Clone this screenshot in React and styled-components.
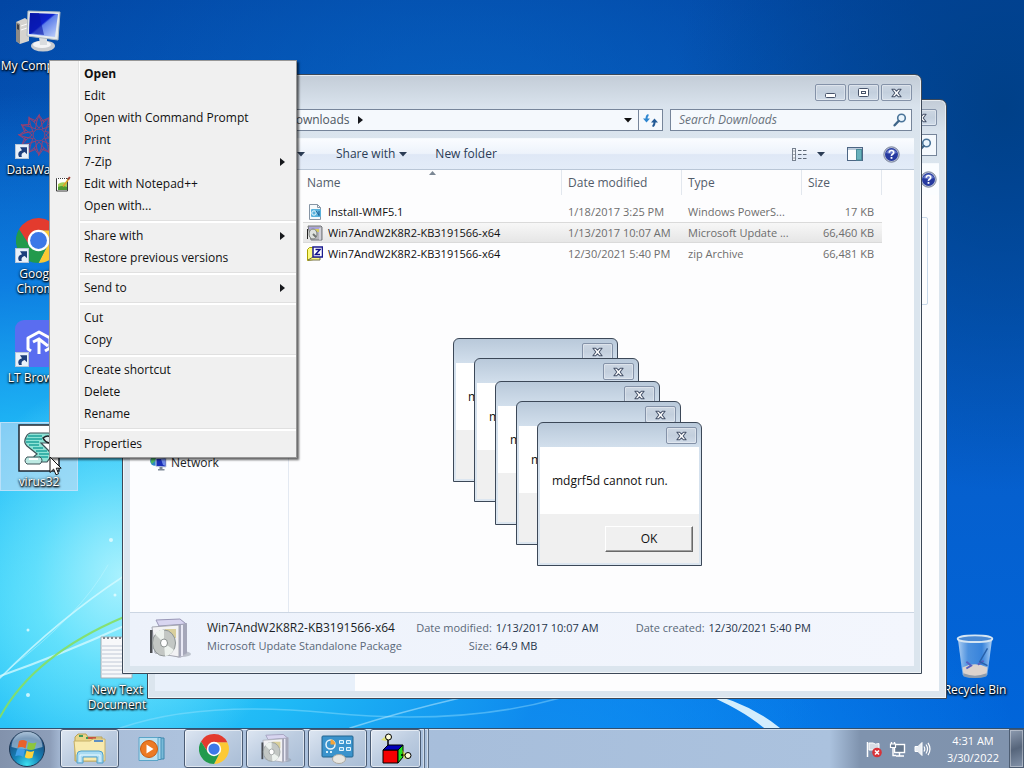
import React from "react";
import styled, { createGlobalStyle, css } from "styled-components";

const palette = {
  ink: "#1b1f26",
  frameLine: "#3c4858",
  frame: "#dbe5ee",
  label: "#5a6878",
  muted: "#6d6d6d",
  toolText: "#2b3c55",
};

const GlobalStyle = createGlobalStyle`
  *{
    box-sizing:border-box;
  }
  body{
    margin:0;
    font-family:"Open Sans","Noto Sans",sans-serif;
    font-size:12px;
    line-height:16px;
    color:${palette.ink};
  }
  button,input{
    font:inherit;
    color:inherit;
    margin:0;
    padding:0;
  }
`;

const Screen = styled.div`
  position: relative;
  display: flex;
  flex-direction: column;
  min-height: 100vh;
  overflow: hidden;
  background:
    radial-gradient(ellipse 17% 26% at 12% 75%, rgba(190, 248, 255, 0.85), rgba(130, 236, 254, 0.55) 50%, rgba(90, 220, 255, 0) 100%),
    radial-gradient(ellipse 75% 68% at 6% 80%, #3fd6fa 0%, #1fb9f6 34%, rgba(16, 138, 236, 0.75) 64%, rgba(8, 100, 210, 0) 100%),
    radial-gradient(ellipse 50% 35% at 50% 100%, #0d95fb, rgba(10, 120, 235, 0) 100%),
    radial-gradient(ellipse 32% 50% at 98% 14%, #004088, rgba(0, 66, 150, 0) 100%),
    radial-gradient(ellipse 50% 40% at 45% 18%, rgba(8, 104, 200, 0.7), rgba(8, 100, 200, 0) 100%),
    linear-gradient(180deg, #0246a4 0%, #0456bb 28%, #0560cf 65%, #0066dc 100%);
`;

const Wallpaper = styled.svg`
  position: absolute;
  inset: 0;
  width: 100%;
  height: 100%;
`;

const Desktop = styled.main`
  position: relative;
  flex: 1;
`;

/* desktop shortcuts */
const ShortcutColumn = styled.div`
  display: grid;
  grid-auto-rows: 104px;
  justify-items: start;
  align-items: start;
  width: 78px;
  padding-top: 6px;
`;

const ShortcutButton = styled.button`
  display: flex;
  flex-direction: column;
  align-items: center;
  gap: 2px;
  width: 78px;
  padding: 1px 0;
  border: 1px solid transparent;
  background: none;
  color: #fff;
  line-height: 15px;
  text-shadow: 0 1px 2px #000, 1px 1px 2px #000, 0 0 3px rgba(0, 0, 0, 0.6);
  white-space: pre;
  ${(props) =>
    props.$selected &&
    css`
      border-color: rgba(190, 225, 250, 0.9);
      background: rgba(190, 220, 245, 0.65);
    `}
`;

const FreeShortcut = styled.div`
  position: absolute;
  bottom: ${(props) => props.$bottom};
  left: ${(props) => props.$left || "auto"};
  right: ${(props) => props.$right || "auto"};
`;

/* windows */
const WindowFrame = styled.section`
  position: absolute;
  display: flex;
  flex-direction: column;
  padding: 0 7px 7px;
  border: 1px solid ${palette.frameLine};
  border-radius: 7px 7px 0 0;
  background: linear-gradient(180deg, #c3ccd7 0, #d9e3ed 32px, ${palette.frame} 70px);
  box-shadow: inset 0 0 0 1px rgba(255, 255, 255, 0.6);
`;

const BackWindow = styled(WindowFrame)`
  inset: 99px 77px 29px 147px;
`;

const FrontWindow = styled(WindowFrame)`
  inset: 74px 102px 54px 122px;
`;

const TitleBar = styled.header`
  display: flex;
  justify-content: flex-end;
  gap: 2px;
  height: 34px;
  padding: 9px 2px 0;
`;

const CaptionButton = styled.button`
  display: flex;
  align-items: center;
  justify-content: center;
  width: 31px;
  height: 17px;
  border: 1px solid #8492a8;
  border-radius: 2px;
  background: linear-gradient(180deg, #ccd6e2, #c3cfdd 50%, #d0dbe8);
  box-shadow: inset 0 0 0 1px rgba(255, 255, 255, 0.35);
`;

const AddressRow = styled.div`
  display: flex;
  gap: 7px;
  height: 22px;
  margin: 0 2px 7px;
`;

const AddressBar = styled.nav`
  flex: 1;
  display: flex;
  align-items: stretch;
  margin-left: 60px;
  border: 1px solid #76859a;
  background: #f5f9fd;
`;

const Crumb = styled.button`
  display: flex;
  align-items: center;
  gap: 8px;
  margin-left: 94px;
  margin-right: auto;
  border: 0;
  background: none;
  color: #4d5661;
`;

const AddressButton = styled.button`
  display: flex;
  align-items: center;
  justify-content: center;
  width: ${(props) => (props.$divided ? "24px" : "20px")};
  border: 0;
  border-left: ${(props) => (props.$divided ? "1px solid #76859a" : "0")};
  background: none;
`;

const SearchBox = styled.label`
  display: flex;
  align-items: center;
  width: 242px;
  padding: 0 4px 0 8px;
  border: 1px solid #76859a;
  background: #f5f9fd;
  input {
    flex: 1;
    min-width: 0;
    border: 0;
    outline: 0;
    background: none;
    font-style: italic;
  }
  input::placeholder {
    color: #68717c;
    opacity: 1;
  }
`;

const Toolbar = styled.div`
  display: flex;
  align-items: center;
  height: 32px;
  padding: 0 14px 0 167px;
  border-top: 1px solid #f5f9fd;
  border-bottom: 1px solid #b9c6d6;
  background: linear-gradient(180deg, #fafcff 0%, #edf3fb 48%, #dfe8f6 52%, #e3ecf8 100%);
`;

const ToolButton = styled.button`
  display: flex;
  align-items: center;
  gap: 4px;
  margin-right: ${(props) => props.$gap || "0"};
  border: 0;
  background: none;
  color: ${palette.toolText};
`;

const ToolSpacer = styled.div`
  flex: 1;
`;

const WindowBody = styled.div`
  flex: 1;
  display: flex;
  min-height: 0;
  background: #fdfdfe;
`;

const NavPane = styled.nav`
  width: 159px;
  padding: 284px 0 0 20px;
  border-right: 1px solid #e3e9f2;
  background: #fcfdff;
`;

const NavItem = styled.a`
  display: flex;
  align-items: center;
  gap: 4px;
  height: 18px;
  color: ${palette.ink};
  text-decoration: none;
`;

const FileArea = styled.div`
  flex: 1;
  padding-left: 14px;
`;

const FileTable = styled.table`
  width: 579px;
  table-layout: fixed;
  border-spacing: 0;
  th,
  td {
    padding: 0 6px;
    white-space: nowrap;
    overflow: hidden;
    text-align: left;
    font-weight: 400;
  }
  th {
    height: 25px;
    border-right: 1px solid #e2e7ee;
    color: #525c6a;
  }
  th:first-child,
  td:first-child {
    padding-left: 4px;
  }
  td {
    height: 21px;
    border-top: 1px solid transparent;
    border-bottom: 1px solid transparent;
    color: ${palette.muted};
    font-size: 11px;
  }
  td:last-child {
    padding-right: 8px;
    text-align: right;
  }
  tbody::before {
    content: "";
    display: block;
    height: 6px;
  }
`;

const FileRow = styled.tr`
  ${(props) =>
    props.$selected &&
    css`
      td {
        border-color: #dadada;
        background: linear-gradient(180deg, #f7f7f7, #e6e6e6);
      }
    `}
`;

const FileName = styled.span`
  display: flex;
  align-items: center;
  gap: 5px;
  color: #101010;
`;

const SortHeader = styled.th`
  position: relative;
`;

const SortMark = styled.span`
  position: absolute;
  top: 1px;
  left: 0;
  right: 0;
  line-height: 0;
  text-align: center;
`;

const DetailsPane = styled.footer`
  display: flex;
  align-items: flex-start;
  height: 54px;
  padding: 4px 16px 0 18px;
  border-top: 1px solid #ccd6e3;
  background: linear-gradient(90deg, #edf2fb, #f3f6fd);
  line-height: 18px;
`;

const DetailsColumn = styled.div`
  margin: 2px 12px 0 15px;
  color: ${palette.label};
  font-size: 11px;
  white-space: nowrap;
  strong {
    font-size: 12px;
    font-weight: 400;
    color: ${palette.ink};
  }
`;

const DetailsList = styled.dl`
  display: grid;
  grid-template-columns: 78px auto;
  column-gap: 4px;
  margin: 2px 28px 0 0;
  font-size: 11px;
  white-space: nowrap;
  dt {
    color: ${palette.label};
    text-align: right;
  }
  dd {
    margin: 0;
    color: #26344a;
  }
`;

const BackSide = styled.div`
  width: 200px;
  background: #e8f0fa;
`;

const BackPanel = styled.div`
  flex: 1;
  height: 88px;
  margin: 22px 11px 0 0;
  border: 1px solid #c9d9ea;
  border-radius: 2px;
`;

const BackToolbar = styled(Toolbar)`
  justify-content: flex-end;
  padding-right: 2px;
  border-bottom-color: #fbfdff;
  background: #fbfdff;
`;

/* message boxes */
const DialogFrame = styled.section`
  position: absolute;
  top: ${(props) => props.$top}px;
  left: ${(props) => props.$left}px;
  display: flex;
  flex-direction: column;
  width: 165px;
  padding: 0 2px 2px;
  border: 1px solid ${palette.frameLine};
  border-radius: 6px 6px 0 0;
  background: linear-gradient(180deg, #b9c9da 0, #d3e0ed 25px, #dce6f0 100%);
`;

const DialogTitle = styled.header`
  display: flex;
  justify-content: flex-end;
  height: 24px;
  padding: 4px 2px 0;
`;

const DialogText = styled.p`
  height: 67px;
  margin: 0;
  padding: 26px 12px 0;
  background: #fff;
  color: #111;
`;

const DialogFooter = styled.footer`
  display: flex;
  justify-content: flex-end;
  height: 49px;
  padding: 12px 6px 0;
  background: #f0f0f0;
`;

const DialogButton = styled.button`
  width: 88px;
  height: 26px;
  border: 1px solid;
  border-color: #fff #696969 #696969 #fff;
  box-shadow: inset -1px -1px 0 #a0a0a0;
  background: #f0f0f0;
  color: #111;
`;

/* context menu */
const Menu = styled.ul`
  position: absolute;
  top: 60px;
  left: 49px;
  width: 248px;
  margin: 0;
  padding: 2px 0;
  list-style: none;
  border: 1px solid #979797;
  background: linear-gradient(90deg, #f1f1f1 28px, #e2e3e3 28px, #e2e3e3 29px, #fff 29px, #fff 30px, #f0f0f0 30px);
  box-shadow: 2px 2px 2px rgba(0, 0, 0, 0.6);
`;

const MenuButton = styled.button`
  display: grid;
  grid-template-columns: 26px 1fr 8px;
  column-gap: 3px;
  align-items: center;
  width: 100%;
  height: 22px;
  padding: 0 8px 0 5px;
  border: 0;
  background: none;
  color: #111;
  text-align: left;
  font-weight: ${(props) => (props.$primary ? 700 : 400)};
`;

const MenuLine = styled.li`
  height: 8px;
  padding: 3px 0 0 30px;
  &::before {
    content: "";
    display: block;
    height: 2px;
    border-top: 1px solid #e0e0e0;
    background: #fff;
  }
`;

const MenuIcon = styled.span`
  height: 16px;
  line-height: 0;
`;

const Pointer = styled.svg`
  position: absolute;
  top: 456px;
  left: 49px;
`;

/* taskbar */
const Taskbar = styled.footer`
  position: relative;
  display: flex;
  align-items: stretch;
  height: 40px;
  border-top: 1px solid #31506f;
  box-shadow: inset 0 1px 0 rgba(255, 255, 255, 0.55);
  background: linear-gradient(90deg, #8292ac 0, #8d9eb9 50px, #a7bbd6 62px, #adc2dd 180px, #a7bedb 440px, #abc2de 81%, #7f93ae 84%, #8093ad 100%);
`;

const StartButton = styled.button`
  width: 54px;
  margin-right: 6px;
  border: 0;
  background: none;
  line-height: 0;
`;

const TaskButton = styled.button`
  display: flex;
  align-items: center;
  justify-content: center;
  width: ${(props) => (props.$stacked ? "51px" : "59px")};
  margin-right: ${(props) => (props.$stacked ? "0" : "3px")};
  border: 1px solid ${(props) => (props.$open ? "#4b5c74" : "transparent")};
  border-radius: 3px;
  background: ${(props) => (props.$open ? "linear-gradient(145deg, #dde6f2 0%, #bccce0 50%, #a9bdd6 100%)" : "none")};
  box-shadow: ${(props) => (props.$open ? "inset 0 0 0 1px rgba(255,255,255,.55)" : "none")};
`;

const StackEdge = styled.span`
  width: 4px;
  border-right: 1px solid #5c6e86;
  box-shadow: inset -1px 0 0 #cfdbe9;
`;

const Tray = styled.div`
  display: flex;
  align-items: center;
  gap: 6px;
  margin-left: auto;
`;

const TrayButton = styled.button`
  width: 18px;
  height: 18px;
  border: 0;
  background: none;
  line-height: 0;
`;

const Clock = styled.time`
  width: 72px;
  color: #fff;
  font-size: 11px;
  line-height: 17px;
  text-align: center;
`;

const ShowDesktop = styled.button`
  width: 15px;
  border: 1px solid #4d5d72;
  background: linear-gradient(160deg, #8d9bb0, #56657b 50%, #8393aa);
  box-shadow: inset 0 0 0 1px rgba(255, 255, 255, 0.35);
`;

/* small glyphs */
const CloseGlyph = () => (
  <svg width="13" height="10" viewBox="0 0 14 12">
    <path d="M1.5 1.5h3.3L7 3.8l2.2-2.3h3.3L9 6l3.5 4.5H9.2L7 8.2l-2.2 2.3H1.5L5 6z" fill="#fff" stroke="#47536a" strokeWidth="1.3" strokeLinejoin="round" />
  </svg>
);

const MinGlyph = () => (
  <svg width="12" height="10" viewBox="0 0 12 10">
    <rect x="0.5" y="5.5" width="10" height="4" rx="1" fill="#fff" stroke="#47536a" />
  </svg>
);

const MaxGlyph = () => (
  <svg width="11" height="9" viewBox="0 0 11 9">
    <rect x="0.5" y="0.5" width="10" height="8" rx="1" fill="#fff" stroke="#47536a" />
    <rect x="3.5" y="3.5" width="4" height="2" fill="#fff" stroke="#47536a" />
  </svg>
);

const DownGlyph = ({ fill = "#2b3c55" }) => (
  <svg width="8" height="5" viewBox="0 0 8 5">
    <path d="M0 0h8L4 4.5z" fill={fill} />
  </svg>
);

const RightGlyph = () => (
  <svg width="5" height="8" viewBox="0 0 5 8">
    <path d="M0 0v8l5-4z" fill="#16181c" />
  </svg>
);

const RefreshIcon = () => (
  <svg width="15" height="13" viewBox="0 0 15 13">
    <path d="M5.5 1Q3.5 1.3 3.5 5" fill="none" stroke="#2d86d0" strokeWidth="2" />
    <path d="M0 4.5h7L3.5 8.5z" fill="#2d86d0" />
    <path d="M9.5 12.2Q11.5 11.8 11.5 8" fill="none" stroke="#235a96" strokeWidth="2" />
    <path d="M8 8.5h7L11.5 4.5z" fill="#235a96" />
  </svg>
);

const SearchIcon = () => (
  <svg width="14" height="14" viewBox="0 0 14 14">
    <circle cx="8.5" cy="5" r="3.8" fill="#eaf5fd" stroke="#4a7499" strokeWidth="1.6" />
    <path d="M5.6 8L1.6 12.3" stroke="#3e6589" strokeWidth="2.4" strokeLinecap="round" />
  </svg>
);

const HelpIcon = () => (
  <svg width="17" height="17" viewBox="0 0 17 17">
    <circle cx="8.5" cy="8.5" r="7.7" fill="#c3cadb" stroke="#77819a" />
    <circle cx="8.5" cy="8.5" r="6.5" fill="#26399f" />
    <path d="M3 7a5.7 5.2 0 0 1 11 0Q8 9 3 7z" fill="#7f92dc" opacity=".65" />
    <path d="M6.3 6.8Q6.3 4.5 8.5 4.5T10.7 6.4Q10.7 7.5 9.5 8.2T8.5 10" fill="none" stroke="#fff" strokeWidth="1.7" />
    <rect x="7.6" y="11" width="1.8" height="1.8" fill="#fff" />
  </svg>
);

const ViewIcon = () => (
  <svg width="15" height="13" viewBox="0 0 15 13">
    <rect x="0.5" y="0.5" width="3" height="12" fill="#f2f5f9" stroke="#77818f" />
    <path d="M1.5 3h1M1.5 6.5h1M1.5 10h1" stroke="#505a6a" />
    <path d="M6 2.5h3.5M11 2.5h3.5M6 6.5h3.5M11 6.5h3.5M6 10.5h3.5M11 10.5h3.5" stroke="#5d6877" />
  </svg>
);

const PreviewIcon = () => (
  <svg width="16" height="14" viewBox="0 0 16 14">
    <rect x="0.5" y="0.5" width="15" height="13" fill="#fbfdff" stroke="#4d6684" />
    <path d="M1 2h14" stroke="#7d98b8" />
    <rect x="9.5" y="2.5" width="5" height="10.5" fill="#68b2bd" stroke="#4a8c99" />
  </svg>
);

const ShortcutArrow = () => (
  <g>
    <rect x="0.5" y="32.5" width="13" height="14" fill="#e9f1fa" stroke="#b7c6d8" />
    <path d="M4 45Q1.5 40 7 38.2L5 35.3h7v7l-2.3-2.3Q5.5 41 6.8 45z" fill="#1d3f7c" />
  </g>
);

/* pictures */
const ComputerIcon = () => (
  <svg width="48" height="48" viewBox="0 0 48 48">
    <defs>
      <linearGradient id="pcScreen" x1="0" y1="0" x2="1" y2="1">
        <stop offset="0" stopColor="#0a16a8" />
        <stop offset=".45" stopColor="#0d22cf" />
        <stop offset=".5" stopColor="#5f80ea" />
        <stop offset="1" stopColor="#c5d6fb" />
      </linearGradient>
    </defs>
    <path d="M1 14l9-4 4 3v20l-9 3-4-3z" fill="#d5d3cf" />
    <path d="M1 14l4 2v20l-4-3z" fill="#8d8a86" />
    <path d="M2 16l2 1v5l-2-1z" fill="#3f3f44" />
    <path d="M6 18l6-2M6 22l6-2" stroke="#fafafa" />
    <ellipse cx="28" cy="38" rx="12" ry="5.5" fill="#c9ccd0" />
    <ellipse cx="27" cy="36.5" rx="9" ry="3.6" fill="#f3f4f6" />
    <path d="M24 29h8v8h-7z" fill="#d9dcdf" />
    <path d="M13 3l32 1-2 28-31-4z" fill="#e6ebee" stroke="#aeb9c1" />
    <path d="M15 5l28 1-3 23-26-3z" fill="url(#pcScreen)" />
    <path d="M15 5h9l5 22-15-2z" fill="#0615a6" opacity=".6" />
  </svg>
);

const WagonIcon = () => (
  <svg width="48" height="48" viewBox="0 0 48 48">
    <g fill="none" stroke="#b93c60" strokeWidth="1" opacity=".8">
      <circle cx="24" cy="23" r="6" />
      {[0, 30, 60, 90, 120, 150, 180, 210, 240, 270, 300, 330].map((a) => (
        <path key={a} transform={`rotate(${a} 24 23)`} d="M24 16l5-6-5-7-5 7zM29 10l6-5M19 10l-5-4" />
      ))}
    </g>
    <ShortcutArrow />
  </svg>
);

const ChromeMark = ({ x = 0, y = 0, size = 48 }) => (
  <svg x={x} y={y} width={size} height={size} viewBox="0 0 48 48">
    <path d="M33.5 29.5L24 48A24 24 0 0 0 45.3 13H24z" fill="#fcc934" />
    <path d="M24 13H45.3A24 24 0 0 0 3.2 12L14.5 29.5z" fill="#e33b2e" />
    <path d="M14.5 29.5L3.2 12A24 24 0 0 0 24 48L33.5 29.5z" fill="#229a4c" />
    <circle cx="24" cy="24" r="11.5" fill="#fff" />
    <circle cx="24" cy="24" r="9" fill="#3c78e8" />
  </svg>
);

const ChromeShortcutIcon = () => (
  <svg width="48" height="48" viewBox="0 0 48 48">
    <ChromeMark x={1} y={2} size={45} />
    <ShortcutArrow />
  </svg>
);

const LtIcon = () => (
  <svg width="48" height="48" viewBox="0 0 48 48">
    <rect x="0" y="0" width="46" height="47" rx="9" fill="#5a6df0" />
    <path d="M16 31l-3-2V18l11-6 11 6v10l-5 3" fill="none" stroke="#fff" strokeWidth="3" strokeLinejoin="round" />
    <path d="M18 22l6-3 9 7M24 19v15" fill="none" stroke="#fff" strokeWidth="3" />
    <ShortcutArrow />
  </svg>
);

const ScriptIcon = () => (
  <svg width="48" height="48" viewBox="0 0 48 48">
    <rect x="4" y="1" width="40" height="46" fill="#fff" stroke="#1d2630" strokeWidth="1.5" />
    <path d="M15 9h18q4 0 5 5 0 4-5 5h-7l7 7q4 4 2 8l-3 4H20q-4-4 2-8l-10-8q-4-4-1-9 1-3 4-4z" fill="#8fe3d6" stroke="#3d5257" strokeWidth="1.2" />
    <path d="M13 12h14M11 15h16M11 18h13M14 21h10M18 24h10M21 27h11M24 30h10M24 33h9" stroke="#1fa39b" strokeWidth="1.3" />
    <path d="M12 33h13q4 3 0 7H12q-4-3 0-7z" fill="#bdeae3" stroke="#3d5257" />
    <path d="M28 14q5-4 9 0 2 4-3 5-4-1-6-5z" fill="#dfeeee" stroke="#1c2226" strokeWidth="1.5" />
    <path d="M14 35h9" stroke="#fff" strokeWidth="2" />
  </svg>
);

const NoteIcon = () => (
  <svg width="48" height="48" viewBox="0 0 48 48">
    <path d="M8 5h31v41H8z" fill="#f7f8fa" stroke="#a5adb5" />
    <path d="M9 14h29M9 18h29M9 22h29M9 26h29M9 30h29M9 34h29M9 38h29M9 42h29" stroke="#c0c8d6" />
    <path d="M10 6h28" stroke="#80868d" strokeWidth="2" strokeDasharray="2 2" />
  </svg>
);

const BinIcon = () => (
  <svg width="48" height="48" viewBox="-1 -2 50 50">
    <defs>
      <linearGradient id="binGlass" x1="0" x2="1">
        <stop offset="0" stopColor="#cfe3f8" stopOpacity=".85" />
        <stop offset=".3" stopColor="#6da5e2" stopOpacity=".7" />
        <stop offset=".7" stopColor="#4f91dd" stopOpacity=".7" />
        <stop offset="1" stopColor="#d2e7fa" stopOpacity=".85" />
      </linearGradient>
    </defs>
    <path d="M6 4h36l-5 38q-1 4-13 4t-13-4z" fill="url(#binGlass)" />
    <path d="M11 35q13-7 26 0l-1 7q-12 5-24 0z" fill="#dcd3cd" />
    <path d="M12 41q12 5 24 0v3q-12 4-24 0z" fill="#8e9bab" />
    <path d="M15 29l5 4-5 3M27 32l6-4" fill="none" stroke="#5760c0" strokeWidth="2" />
    <path d="M37 15l-8 14 8 4" fill="none" stroke="#2860a9" strokeWidth="1.5" />
    <ellipse cx="24" cy="5" rx="18" ry="3.5" fill="#4b8ad4" stroke="#d5e5f3" strokeWidth="2" />
  </svg>
);

const PackageIcon = ({ size = 44 }) => (
  <svg width={size} height={size} viewBox="0 0 44 44">
    <ellipse cx="34" cy="37" rx="9" ry="3" fill="#8d93a0" opacity=".5" />
    <path d="M8 3l24-1 7 5v30l-7 4-7-2V9z" fill="#b9bac8" />
    <path d="M8 3l24-1 6 5-27 2z" fill="#d8d5f0" stroke="#9a98b8" />
    <path d="M4 10l27-2v32L7 36z" fill="#f2f2f4" stroke="#a6a8b2" />
    <path d="M31 8l8-2v30l-8 4z" fill="#a5a7b9" />
    <path d="M34 8v31" stroke="#e9e9f5" strokeWidth="2" />
    <path d="M17 12h11v9H17z" fill="#d9cf9c" />
    <rect x="2" y="13" width="2.5" height="23" fill="#4a4d52" />
    <ellipse cx="16" cy="26" rx="11.5" ry="13" fill="#c3c7c4" stroke="#8f9695" />
    <path d="M16 26L7 17q4-5 9-4zM16 26l10 7q-4 6-9 6z" fill="#edf2ee" />
    <ellipse cx="16" cy="26" rx="3.5" ry="4" fill="#fff" stroke="#8a908f" />
  </svg>
);

const SmallPackageIcon = () => (
  <svg width="16" height="16" viewBox="0 0 16 16">
    <path d="M1 1h13l1 1v13H4z" fill="#b6b7bb" stroke="#75777d" />
    <path d="M2 2h11v2H2z" fill="#a9a3d8" />
    <path d="M7 4h5v3H7z" fill="#d8cb5f" />
    <rect x="0" y="4" width="1" height="10" fill="#222" />
    <ellipse cx="6" cy="9" rx="4" ry="5" fill="#dfe3df" stroke="#7c817e" />
    <path d="M6 9l3 3" stroke="#6f7471" strokeWidth="2" />
    <path d="M13 3v12" stroke="#ecebf6" />
  </svg>
);

const PowerShellIcon = () => (
  <svg width="16" height="16" viewBox="0 0 16 16">
    <path d="M2.5.5h8l3 3v12h-11z" fill="#f7fafc" stroke="#8695a5" />
    <path d="M10.500.5v3h3" fill="none" stroke="#8695a5" />
    <rect x="4" y="5" width="10" height="8" rx="1" fill="#58b2dd" />
    <circle cx="7" cy="9" r="2.2" fill="none" stroke="#eefaff" />
    <path d="M9 7l3 4M12 7v5" fill="none" stroke="#1d5f94" />
  </svg>
);

const ZipIcon = () => (
  <svg width="16" height="16" viewBox="0 0 16 16">
    <path d="M.5 3.500l2-2h4v12l-6 1z" fill="#fdfb7e" stroke="#a9a100" />
    <path d="M1 14h12v-3H6z" fill="#fdfb7e" stroke="#77724a" />
    <rect x="6" y="1" width="9.5" height="10" fill="#fff" stroke="#1b1b8f" strokeWidth="1.5" />
    <path d="M8.500 3.500h4.500l-4.500 5h4.500" fill="none" stroke="#11118a" strokeWidth="1.500" />
  </svg>
);

const NetworkIcon = () => (
  <svg width="17" height="16" viewBox="0 0 17 16">
    <circle cx="5" cy="6" r="4.800" fill="#2a86c8" />
    <path d="M1 4q2-3 5-2l-1 4-3 3q-2-2-1-5z" fill="#4bb865" />
    <path d="M6 3.500l10-.500v9l-10-.500z" fill="#1a2fb8" stroke="#c5d1df" />
    <path d="M11 4l4-.200v7L13 10z" fill="#6f8bea" />
    <path d="M9.500 12h3v2h2v1.500H8V14h1.500z" fill="#7d8896" />
  </svg>
);

const NotepadPlusIcon = () => (
  <svg width="16" height="16" viewBox="0 0 16 16">
    <path d="M1.500 2.500h11v12.500h-11z" fill="#fff" stroke="#3b3b3b" />
    <path d="M2 2.500h10" stroke="#fff" strokeDasharray="1 1" />
    <path d="M3 8q4-3 9-1v7H3z" fill="#a4d155" />
    <path d="M3 11q4-2 9 0v3H3z" fill="#4e9a35" />
    <path d="M8 10.500L14 2.500" stroke="#e0a12c" strokeWidth="1.600" />
    <path d="M13.200 3.500l1.600-2.500" stroke="#9c3a30" strokeWidth="1.800" />
  </svg>
);

const StartOrb = () => (
  <svg width="38" height="38" viewBox="0 0 38 38">
    <defs>
      <radialGradient id="orbBase" cx=".5" cy=".95" r=".95">
        <stop offset="0" stopColor="#3ce0f0" />
        <stop offset=".4" stopColor="#1583b8" />
        <stop offset=".8" stopColor="#1c4f82" />
        <stop offset="1" stopColor="#7fa3c4" />
      </radialGradient>
    </defs>
    <circle cx="19" cy="19" r="17.5" fill="url(#orbBase)" stroke="#1c3653" />
    <path d="M3.5 17a15.5 15.5 0 0 1 31 0q-15 5-31 0z" fill="#dbe8f4" opacity=".5" />
    <path d="M11 11q4-2 8 .5l-1.500 7q-4-2.500-8-.5z" fill="#e8622a" />
    <path d="M20.500 12q4 2.300 8 .3l-2 7q-4 1.700-7.500-.5z" fill="#8cc63e" />
    <path d="M9 19.500q4-2 8 .5l-1.800 7q-4-2.500-8-.7z" fill="#3f9fe8" />
    <path d="M18.600 20.500q4 2.300 7.600.3l-1.800 7q-4 1.700-7.600-.5z" fill="#fdd23c" />
  </svg>
);

const FolderIcon = () => (
  <svg width="36" height="32" viewBox="0 0 36 32">
    <path d="M3 4l3-3h8l2 3h14v24H3z" fill="#e9d589" stroke="#b9a258" />
    <path d="M7 3h4M14 5h9" stroke="#3f9b5c" strokeWidth="2" />
    <path d="M16 5h8" stroke="#c9553f" strokeWidth="2" />
    <path d="M2 8h16l3-2h12v22H4z" fill="#f8eaae" stroke="#c6b068" />
    <path d="M22 8h9" stroke="#5e8fc2" strokeWidth="2" />
    <path d="M5 30v-8q0-4 4-4h18q4 0 4 4v8h-6v-6H11v6z" fill="#a9dbf2" stroke="#4f9fca" />
    <path d="M8 29v-7h20v7" fill="none" stroke="#e9f8ff" />
  </svg>
);

const MediaIcon = () => (
  <svg width="28" height="26" viewBox="0 0 28 26">
    <path d="M20 2h6v21h-6z" fill="#78bad8" stroke="#3e86ac" />
    <path d="M17 1.500h6v22h-6z" fill="#a6d6eb" stroke="#4791b8" />
    <path d="M1 1.500h19v23H1z" fill="#bce1f1" stroke="#5aa5c8" />
    <circle cx="11" cy="13" r="8.500" fill="#ec7a24" stroke="#c95c12" />
    <path d="M8.500 8.500v9l7-4.500z" fill="#fff" />
  </svg>
);

const ControlIcon = () => (
  <svg width="34" height="30" viewBox="0 0 34 30">
    <rect x="1" y="2" width="31" height="21" rx="1" fill="#3b93cc" stroke="#23658f" />
    <circle cx="9.500" cy="10.500" r="4.500" fill="#3b93cc" stroke="#e9f5fb" strokeWidth="1.500" />
    <path d="M9.500 10.500V5.500a5 5 0 0 1 5 5z" fill="#f4a53b" />
    <path d="M5 18h2M9 18h2" stroke="#d8eef8" strokeWidth="2" />
    <path d="M18.500 6.500h4v3h-4zM25.500 6.500h4v3h-4zM18.500 13.500h4v3h-4zM25.500 13.500h4v3h-4z" fill="#5eaede" stroke="#e4f4fc" />
    <ellipse cx="18" cy="25" rx="6.500" ry="4.500" fill="#e8e6e0" stroke="#aaa79f" />
  </svg>
);

const CubeIcon = () => (
  <svg width="32" height="32" viewBox="0 0 32 32">
    <path d="M3 17h15v13H3z" fill="#f40000" stroke="#000" />
    <path d="M3 17l5-5h15l-5 5z" fill="#0000b8" stroke="#000" />
    <path d="M18 17l5-5v12l-5 6z" fill="#22e022" stroke="#000" />
    <path d="M8 12V5M21 22h5" stroke="#000" strokeWidth="1.500" />
    <path d="M1 7l7-6 3 3-5 4zM22 17l8 8-6 1z" fill="#f4f000" opacity=".5" />
    <circle cx="8.500" cy="4" r="3" fill="#fffdd8" stroke="#000" />
    <circle cx="28" cy="22.500" r="3" fill="#fffdd8" stroke="#000" />
  </svg>
);

const FlagIcon = () => (
  <svg width="18" height="18" viewBox="0 0 18 18">
    <path d="M2.500 2v15" stroke="#fff" strokeWidth="1.500" />
    <path d="M4 3h4q2 2 6 .5v7q-4 1.500-6-.5H4z" fill="#d6dce5" stroke="#fff" />
    <circle cx="12" cy="12.500" r="4.800" fill="#d83238" />
    <path d="M10 10.500l4 4M14 10.500l-4 4" stroke="#fff" strokeWidth="1.600" />
  </svg>
);

const WiredIcon = () => (
  <svg width="18" height="18" viewBox="0 0 18 18">
    <rect x="5.500" y="4.500" width="10" height="8" fill="#66788e" stroke="#fff" strokeWidth="1.400" />
    <path d="M10.500 13v2.500M7 16h8M2.500 2v2M5.500 2v2M4 8v7.500h3" stroke="#fff" strokeWidth="1.400" fill="none" />
    <path d="M1.500 4h5v3.500h-5z" fill="#66788e" stroke="#fff" strokeWidth="1.200" />
  </svg>
);

const SpeakerIcon = () => (
  <svg width="18" height="18" viewBox="0 0 18 18">
    <path d="M2 6.500h3l4-4v13l-4-4H2z" fill="#e8edf3" stroke="#fff" />
    <path d="M11 6.500q1.600 2.500 0 5M13 4.500q3 4.500 0 9M15 2.800q4 6.200 0 12.400" fill="none" stroke="#fff" strokeWidth="1.200" />
  </svg>
);

const shortcuts = [
  { label: "My Computer", Icon: ComputerIcon },
  { label: "DataWagon", Icon: WagonIcon },
  { label: "Google\nChrome", Icon: ChromeShortcutIcon },
  { label: "LT Browser", Icon: LtIcon },
  { label: "virus32", Icon: ScriptIcon, selected: true },
];

const files = [
  { name: "Install-WMF5.1", date: "1/18/2017 3:25 PM", type: "Windows PowerS...", size: "17 KB", icon: <PowerShellIcon /> },
  { name: "Win7AndW2K8R2-KB3191566-x64", date: "1/13/2017 10:07 AM", type: "Microsoft Update ...", size: "66,460 KB", icon: <SmallPackageIcon />, selected: true },
  { name: "Win7AndW2K8R2-KB3191566-x64", date: "12/30/2021 5:40 PM", type: "zip Archive", size: "66,481 KB", icon: <ZipIcon /> },
];

const menuItems = [
  { label: "Open", primary: true },
  { label: "Edit" },
  { label: "Open with Command Prompt" },
  { label: "Print" },
  { label: "7-Zip", sub: true },
  { label: "Edit with Notepad++", icon: <NotepadPlusIcon /> },
  { label: "Open with..." },
  null,
  { label: "Share with", sub: true },
  { label: "Restore previous versions" },
  null,
  { label: "Send to", sub: true },
  null,
  { label: "Cut" },
  { label: "Copy" },
  null,
  { label: "Create shortcut" },
  { label: "Delete" },
  { label: "Rename" },
  null,
  { label: "Properties" },
];

const dialogs = [
  { left: 453, top: 338 },
  { left: 474, top: 358 },
  { left: 495, top: 381 },
  { left: 516, top: 401 },
  { left: 537, top: 422 },
];

const Shortcut = ({ label, Icon, selected }) => (
  <ShortcutButton $selected={selected}>
    <Icon />
    <span>{label}</span>
  </ShortcutButton>
);

const Caption = ({ closeOnly }) => (
  <>
    {!closeOnly && (
      <>
        <CaptionButton aria-label="Minimize"><MinGlyph /></CaptionButton>
        <CaptionButton aria-label="Maximize"><MaxGlyph /></CaptionButton>
      </>
    )}
    <CaptionButton aria-label="Close"><CloseGlyph /></CaptionButton>
  </>
);

const Dialog = ({ left, top }) => (
  <DialogFrame $left={left} $top={top} role="dialog">
    <DialogTitle><Caption closeOnly /></DialogTitle>
    <DialogText>mdgrf5d cannot run.</DialogText>
    <DialogFooter><DialogButton>OK</DialogButton></DialogFooter>
  </DialogFrame>
);

const ControlPanelWindow = () => (
  <BackWindow>
    <TitleBar><Caption closeOnly /></TitleBar>
    <AddressRow>
      <AddressBar aria-label="Address" />
      <SearchBox>
        <input type="search" aria-label="Search" />
        <SearchIcon />
      </SearchBox>
    </AddressRow>
    <BackToolbar>
      <ToolButton aria-label="Help"><HelpIcon /></ToolButton>
    </BackToolbar>
    <WindowBody>
      <BackSide />
      <BackPanel />
    </WindowBody>
  </BackWindow>
);

const ExplorerWindow = () => (
  <FrontWindow>
    <TitleBar><Caption /></TitleBar>
    <AddressRow>
      <AddressBar aria-label="Address">
        <Crumb>Downloads <RightGlyph /></Crumb>
        <AddressButton aria-label="Previous locations"><DownGlyph fill="#111" /></AddressButton>
        <AddressButton aria-label="Refresh" $divided><RefreshIcon /></AddressButton>
      </AddressBar>
      <SearchBox>
        <input type="search" placeholder="Search Downloads" aria-label="Search Downloads" />
        <SearchIcon />
      </SearchBox>
    </AddressRow>
    <Toolbar>
      <ToolButton aria-label="Include in library" $gap="31px"><DownGlyph /></ToolButton>
      <ToolButton $gap="28px">Share with <DownGlyph /></ToolButton>
      <ToolButton>New folder</ToolButton>
      <ToolSpacer />
      <ToolButton aria-label="Change your view" $gap="10px"><ViewIcon /></ToolButton>
      <ToolButton aria-label="More options" $gap="22px"><DownGlyph /></ToolButton>
      <ToolButton aria-label="Preview pane" $gap="20px"><PreviewIcon /></ToolButton>
      <ToolButton aria-label="Help"><HelpIcon /></ToolButton>
    </Toolbar>
    <WindowBody>
      <NavPane>
        <NavItem href="#network"><NetworkIcon />Network</NavItem>
      </NavPane>
      <FileArea>
        <FileTable>
          <colgroup>
            <col />
            <col width="120" />
            <col width="120" />
            <col width="80" />
          </colgroup>
          <thead>
            <tr>
              <SortHeader>
                Name
                <SortMark>
                  <svg width="7" height="4" viewBox="0 0 7 4"><path d="M0 4l3.5-4L7 4z" fill="#7b8794" /></svg>
                </SortMark>
              </SortHeader>
              <th>Date modified</th>
              <th>Type</th>
              <th>Size</th>
            </tr>
          </thead>
          <tbody>
            {files.map((file) => (
              <FileRow key={file.type} $selected={file.selected}>
                <td><FileName>{file.icon}{file.name}</FileName></td>
                <td>{file.date}</td>
                <td>{file.type}</td>
                <td>{file.size}</td>
              </FileRow>
            ))}
          </tbody>
        </FileTable>
      </FileArea>
    </WindowBody>
    <DetailsPane>
      <PackageIcon />
      <DetailsColumn>
        <strong>Win7AndW2K8R2-KB3191566-x64</strong>
        <div>Microsoft Update Standalone Package</div>
      </DetailsColumn>
      <DetailsList>
        <dt>Date modified:</dt>
        <dd>1/13/2017 10:07 AM</dd>
        <dt>Size:</dt>
        <dd>64.9 MB</dd>
      </DetailsList>
      <DetailsList>
        <dt>Date created:</dt>
        <dd>12/30/2021 5:40 PM</dd>
      </DetailsList>
    </DetailsPane>
  </FrontWindow>
);

const ContextMenu = () => (
  <Menu>
    {menuItems.map((item, i) =>
      item ? (
        <li key={i}>
          <MenuButton $primary={item.primary}>
            <MenuIcon>{item.icon}</MenuIcon>
            <span>{item.label}</span>
            {item.sub && <RightGlyph />}
          </MenuButton>
        </li>
      ) : (
        <MenuLine key={i} />
      )
    )}
  </Menu>
);

const App = () => {
  return (
    <>
      <GlobalStyle />
      <Screen>
        <Wallpaper viewBox="0 0 1024 768" preserveAspectRatio="none" aria-hidden="true">
          <g fill="none" strokeLinecap="round">
            <path d="M0 678Q60 618 124 576" stroke="#d8fbff" strokeWidth="1.5" opacity=".75" />
            <path d="M0 676Q60 655 124 626" stroke="#d8fbff" strokeWidth="2" opacity=".75" />
            <path d="M10 668Q80 615 108 565" stroke="#c6f6ff" opacity=".45" />
            <path d="M0 717Q34 655 124 617" stroke="#86df62" strokeWidth="2" opacity=".9" />
            <path d="M120 728Q200 700 330 713T560 698" stroke="#9fe6ff" strokeWidth="1.5" opacity=".4" />
            <path d="M350 728Q400 712 460 698" stroke="#c8efff" strokeWidth="1.5" opacity=".5" />
          </g>
          <path d="M700 692Q745 700 780 728L764 728Q740 708 700 692z" fill="#eafaff" opacity=".9" />
          <g fill="#e9feff" opacity=".8">
            <circle cx="111" cy="540" r="2" />
            <circle cx="115" cy="595" r="1.5" />
            <circle cx="28" cy="630" r="1.5" />
            <circle cx="28" cy="695" r="2" />
          </g>
        </Wallpaper>
        <Desktop>
          <ShortcutColumn>
            {shortcuts.map((item) => (
              <Shortcut key={item.label} {...item} />
            ))}
          </ShortcutColumn>
          <FreeShortcut $left="78px" $bottom="14px">
            <Shortcut label={"New Text\nDocument"} Icon={NoteIcon} />
          </FreeShortcut>
          <FreeShortcut $right="10px" $bottom="29px">
            <Shortcut label="Recycle Bin" Icon={BinIcon} />
          </FreeShortcut>
          <ControlPanelWindow />
          <ExplorerWindow />
          {dialogs.map((pos) => (
            <Dialog key={pos.left} {...pos} />
          ))}
          <ContextMenu />
          <Pointer width="13" height="20" viewBox="0 0 13 20" aria-hidden="true">
            <path d="M1 1v15.500l3.600-3.400L7 18.800l2.600-1.100-2.300-5.500h4.900z" fill="#fff" stroke="#111" />
          </Pointer>
        </Desktop>
        <Taskbar>
          <StartButton aria-label="Start"><StartOrb /></StartButton>
          <TaskButton $open aria-label="Windows Explorer"><FolderIcon /></TaskButton>
          <TaskButton aria-label="Media Player"><MediaIcon /></TaskButton>
          <TaskButton $open aria-label="Google Chrome"><ChromeMark size={30} /></TaskButton>
          <TaskButton $open aria-label="Update Package"><PackageIcon size={32} /></TaskButton>
          <TaskButton $open aria-label="Control Panel"><ControlIcon /></TaskButton>
          <TaskButton $open $stacked aria-label="Registry Editor"><CubeIcon /></TaskButton>
          <StackEdge />
          <StackEdge />
          <Tray>
            <TrayButton aria-label="Action Center"><FlagIcon /></TrayButton>
            <TrayButton aria-label="Network"><WiredIcon /></TrayButton>
            <TrayButton aria-label="Volume"><SpeakerIcon /></TrayButton>
            <Clock>
              4:31 AM
              <br />
              3/30/2022
            </Clock>
          </Tray>
          <ShowDesktop aria-label="Show desktop" />
        </Taskbar>
      </Screen>
    </>
  );
};

export default App;
